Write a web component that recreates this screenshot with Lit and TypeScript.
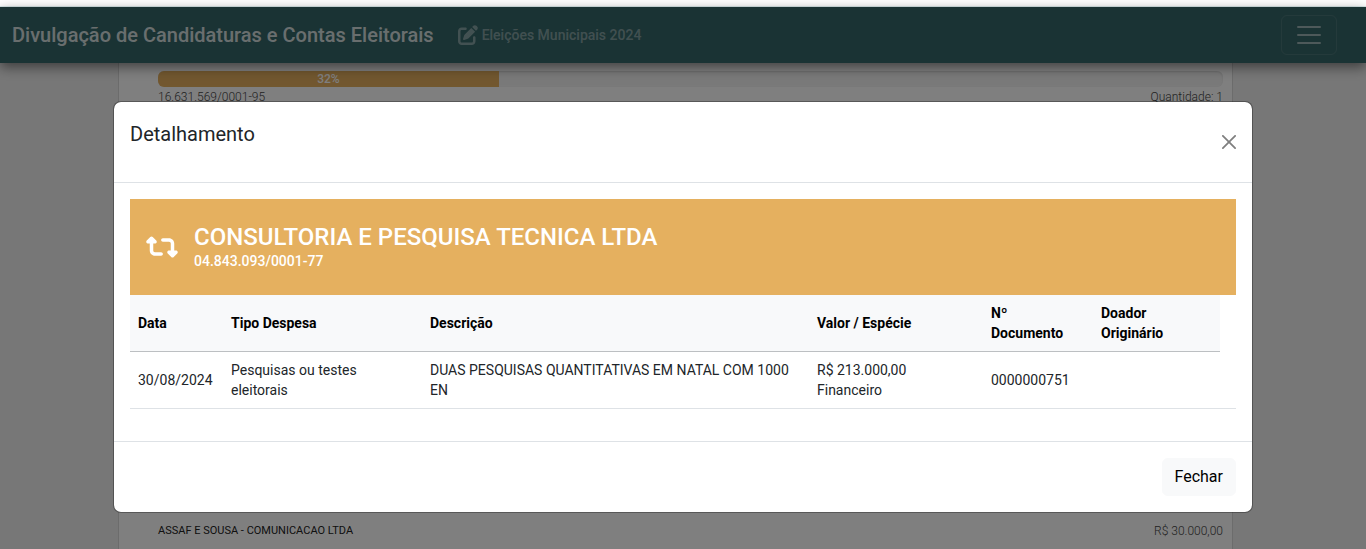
import { LitElement, html, css } from "lit";
import { customElement, property } from "lit/decorators.js";

interface Expense {
  date: string;
  type: string;
  description: string;
  value: string;
  kind: string;
  document: string;
  donor: string;
}

@customElement("site-navbar")
export class SiteNavbar extends LitElement {
  static styles = css`
    :host { display: block; position: relative; }
    .bar {
      display: flex;
      align-items: center;
      box-sizing: border-box;
      height: 56px;
      padding: 0 29px 0 12px;
      background: #356668;
      box-shadow: 0 4px 12px rgba(0, 0, 0, 0.5);
      color: rgba(255, 255, 255, 0.8);
    }
    .brand { font-size: 20px; line-height: 30px; font-weight: 500; color: inherit; text-decoration: none; margin-right: 24px; }
    .election { display: flex; align-items: center; gap: 4px; font-size: 14px; line-height: 20px; font-weight: 500; color: rgba(255, 255, 255, 0.4); text-decoration: none; }
    .election svg { width: 20px; height: 20px; fill: currentColor; }
    .toggler {
      margin-left: auto;
      padding: 4px 12px;
      height: 40px;
      box-sizing: border-box;
      border: 1px solid rgba(255, 255, 255, 0.1);
      border-radius: 6px;
      background: none;
      color: rgba(255, 255, 255, 0.5);
    }
    .toggler svg { display: block; width: 30px; height: 30px; fill: none; stroke: currentColor; stroke-width: 2; stroke-linecap: round; }
  `;

  render() {
    return html`
      <nav class="bar">
        <a class="brand" href="#">Divulgação de Candidaturas e Contas Eleitorais</a>
        <a class="election" href="#">
          <svg viewBox="0 0 512 512" aria-hidden="true"><path d="M471.6 21.7c-21.9-21.9-57.3-21.9-79.2 0L362.3 51.7l97.9 97.9 30.1-30.1c21.9-21.9 21.9-57.3 0-79.2L471.6 21.7zm-299.2 220c-6.1 6.1-10.8 13.6-13.5 21.9l-29.6 88.8c-2.9 8.6-.6 18.1 5.8 24.6s15.9 8.7 24.6 5.8l88.8-29.6c8.2-2.7 15.7-7.4 21.9-13.5L437.7 172.3 339.7 74.3 172.4 241.7zM96 64C43 64 0 107 0 160V416c0 53 43 96 96 96H352c53 0 96-43 96-96V320c0-17.7-14.3-32-32-32s-32 14.3-32 32v96c0 17.7-14.3 32-32 32H96c-17.7 0-32-14.3-32-32V160c0-17.7 14.3-32 32-32h96c17.7 0 32-14.3 32-32s-14.3-32-32-32H96z"/></svg>
          <span>Eleições Municipais 2024</span>
        </a>
        <button class="toggler" type="button" aria-label="Menu">
          <svg viewBox="0 0 30 30"><path d="M4 7h22M4 15h22M4 23h22" /></svg>
        </button>
      </nav>
    `;
  }
}

@customElement("supplier-list")
export class SupplierList extends LitElement {
  @property({ type: Number }) percent = 32;

  static styles = css`
    :host { display: flex; flex: 1; padding-right: 15px; }
    .card {
      flex: 1;
      display: flex;
      flex-direction: column;
      justify-content: space-between;
      max-width: 1115px;
      box-sizing: border-box;
      margin: 0 auto;
      padding: 8px 9px 8px 39px;
      border: solid #d8d8d8;
      border-width: 0 1px;
      background: #fff;
      color: #444;
      font-size: 12px;
      line-height: 20px;
      font-weight: 300;
    }
    .track { height: 16px; border-radius: 6px; background: #f4f4f4; overflow: hidden; box-shadow: inset 0 1px 2px rgba(0, 0, 0, 0.1); }
    .fill { height: 16px; background: #e5b05f; color: #fff; text-align: center; line-height: 16px; font-weight: 500; }
    .row { display: flex; justify-content: space-between; }
    .name { font-size: 11px; font-weight: 400; color: #222; }
  `;

  render() {
    return html`
      <section class="card">
        <div>
          <div class="track"><div class="fill" style="width:${this.percent}%">${this.percent}%</div></div>
          <div class="row"><span>16.631.569/0001-95</span><span>Quantidade: 1</span></div>
        </div>
        <div class="row"><span class="name">ASSAF E SOUSA - COMUNICACAO LTDA</span><span>R$ 30.000,00</span></div>
      </section>
    `;
  }
}

@customElement("detail-dialog")
export class DetailDialog extends LitElement {
  @property({ attribute: false }) expenses: Expense[] = [];

  static styles = css`
    :host { display: block; }
    .dialog {
      display: block;
      position: static;
      box-sizing: border-box;
      width: auto;
      max-width: 1140px;
      margin: 0 auto;
      padding: 0;
      border: 1px solid rgba(0, 0, 0, 0.3);
      border-radius: 8px;
      background: #fff;
      background-clip: padding-box;
      color: #212529;
    }
    .head { display: flex; align-items: center; justify-content: space-between; padding: 16px; border-bottom: 1px solid #dee2e6; }
    .title { margin: 0 0 16px; font-size: 20px; line-height: 32px; font-weight: 400; }
    .close { padding: 0; border: 0; background: none; color: #7f7f7f; }
    .close svg { display: block; width: 14px; height: 14px; fill: currentColor; }
    .body { padding: 16px 16px 32px; }
    .banner { display: flex; align-items: center; gap: 16px; box-sizing: border-box; min-height: 96px; padding: 16px; background: #e5b05f; color: #fff; }
    .banner svg { width: 32px; height: 28px; fill: currentColor; }
    .company { margin: 0; font-size: 24px; line-height: 28px; font-weight: 500; }
    .taxid { margin: 0; font-size: 14px; line-height: 20px; font-weight: 500; }
    table { width: 100%; table-layout: fixed; border-collapse: separate; border-spacing: 0; font-size: 14px; line-height: 20px; }
    th, td { padding: 8px; text-align: left; vertical-align: middle; }
    th { background: #f8f9fa; color: #000; font-weight: 700; border-bottom: 1px solid #bcbfc2; }
    td { border-bottom: 1px solid #dee2e6; }
    .date { width: 77px; }
    .type { width: 183px; }
    .value { width: 158px; }
    .doc { width: 94px; }
    .donor { width: 111px; }
    .spare { width: 16px; padding: 0; background: none; border-bottom-color: transparent; }
    td.spare { border-bottom-color: #dee2e6; }
    .foot { display: flex; justify-content: flex-end; padding: 16px; border-top: 1px solid #dee2e6; }
    .dismiss { padding: 6px 12px; border: 1px solid #f8f9fa; border-radius: 6px; background: #f8f9fa; color: #000; font: 400 16px/24px Roboto, sans-serif; }
  `;

  render() {
    return html`
      <dialog class="dialog" open aria-labelledby="title">
        <header class="head">
          <h1 class="title" id="title">Detalhamento</h1>
          <button class="close" type="button" aria-label="Fechar janela">
            <svg viewBox="0 0 16 16"><path d="M.293.293a1 1 0 0 1 1.414 0L8 6.586 14.293.293a1 1 0 1 1 1.414 1.414L9.414 8l6.293 6.293a1 1 0 0 1-1.414 1.414L8 9.414l-6.293 6.293a1 1 0 0 1-1.414-1.414L6.586 8 .293 1.707a1 1 0 0 1 0-1.414z" /></svg>
          </button>
        </header>
        <div class="body">
          <div class="banner">
            <svg viewBox="0 0 576 512" aria-hidden="true"><path d="M272 416c17.7 0 32-14.3 32-32s-14.3-32-32-32H160c-17.7 0-32-14.3-32-32V192h32c12.9 0 24.6-7.8 29.6-19.8s2.2-25.7-6.9-34.9l-64-64c-12.5-12.5-32.8-12.5-45.3 0l-64 64c-9.2 9.2-11.9 22.9-6.9 34.9s16.6 19.8 29.6 19.8l32 0 0 128c0 53 43 96 96 96l112 0zM304 96c-17.7 0-32 14.3-32 32s14.3 32 32 32l112 0c17.7 0 32 14.3 32 32l0 128-32 0c-12.9 0-24.6 7.8-29.6 19.8s-2.2 25.7 6.9 34.9l64 64c12.5 12.5 32.8 12.5 45.3 0l64-64c9.2-9.2 11.9-22.9 6.9-34.9s-16.6-19.8-29.6-19.8l-32 0 0-128c0-53-43-96-96-96L304 96z" /></svg>
            <div>
              <h2 class="company">CONSULTORIA E PESQUISA TECNICA LTDA</h2>
              <p class="taxid">04.843.093/0001-77</p>
            </div>
          </div>
          <table>
            <thead>
              <tr>
                <th class="date" scope="col">Data</th>
                <th class="type" scope="col">Tipo Despesa</th>
                <th scope="col">Descrição</th>
                <th class="value" scope="col">Valor / Espécie</th>
                <th class="doc" scope="col">Nº<br />Documento</th>
                <th class="donor" scope="col">Doador<br />Originário</th>
                <th class="spare"></th>
              </tr>
            </thead>
            <tbody>
              ${this.expenses.map(
                (e) => html`<tr>
                  <td>${e.date}</td>
                  <td>${e.type}</td>
                  <td>${e.description}</td>
                  <td>${e.value}<br />${e.kind}</td>
                  <td>${e.document}</td>
                  <td>${e.donor}</td>
                  <td class="spare"></td>
                </tr>`
              )}
            </tbody>
          </table>
        </div>
        <footer class="foot"><button class="dismiss" type="button">Fechar</button></footer>
      </dialog>
    `;
  }
}

@customElement("app-root")
export class AppRoot extends LitElement {
  private expenses: Expense[] = [
    {
      date: "30/08/2024",
      type: "Pesquisas ou testes eleitorais",
      description: "DUAS PESQUISAS QUANTITATIVAS EM NATAL COM 1000 EN",
      value: "R$ 213.000,00",
      kind: "Financeiro",
      document: "0000000751",
      donor: "",
    },
  ];

  static styles = css`
    :host { display: flex; flex-direction: column; min-height: 100vh; font-family: Roboto, sans-serif; background: #fff; }
    .strip { height: 6px; border-bottom: 1px solid #dcebec; }
    .page { flex: 1; display: flex; flex-direction: column; position: relative; background: #efefef; }
    .backdrop { position: absolute; inset: 0; box-sizing: border-box; padding: 94px 16px 16px; background: rgba(0, 0, 0, 0.5); }
  `;

  render() {
    return html`
      <div class="strip"></div>
      <div class="page">
        <site-navbar></site-navbar>
        <supplier-list></supplier-list>
        <div class="backdrop"><detail-dialog .expenses=${this.expenses}></detail-dialog></div>
      </div>
    `;
  }
}
